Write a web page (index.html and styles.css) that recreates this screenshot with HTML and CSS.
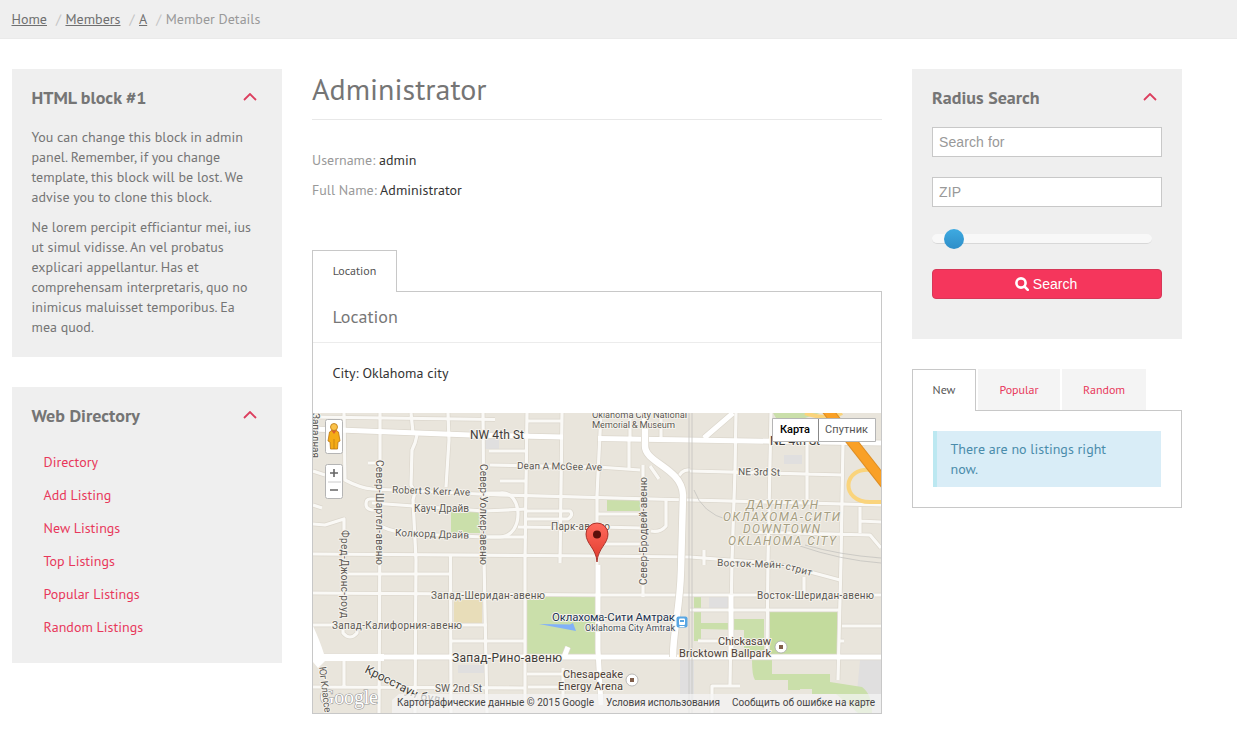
FILE: index.html
```html
<!DOCTYPE html>
<html lang="en">
<head>
<meta charset="utf-8">
<title>Administrator - Member Details</title>
<link rel="stylesheet" href="styles.css">
</head>
<body>
<nav class="breadcrumb">
  <a href="#">Home</a><span class="sep">/</span><a href="#">Members</a><span class="sep">/</span><a href="#">A</a><span class="sep">/</span><span class="current">Member Details</span>
</nav>
<div class="page">
  <aside class="column">
    <section class="box box-html">
      <header class="box-head"><h3>HTML block #1</h3><svg class="chevron" viewBox="0 0 14 8"><path d="M1 7 7 1l6 6"/></svg></header>
      <p>You can change this block in admin<br>panel. Remember, if you change<br>template, this block will be lost. We<br>advise you to clone this block.</p>
      <p>Ne lorem percipit efficiantur mei, ius<br>ut simul vidisse. An vel probatus<br>explicari appellantur. Has et<br>comprehensam interpretaris, quo no<br>inimicus maluisset temporibus. Ea<br>mea quod.</p>
    </section>
    <section class="box box-dir">
      <header class="box-head"><h3>Web Directory</h3><svg class="chevron" viewBox="0 0 14 8"><path d="M1 7 7 1l6 6"/></svg></header>
      <ul class="links">
        <li><a href="#">Directory</a></li>
        <li><a href="#">Add Listing</a></li>
        <li><a href="#">New Listings</a></li>
        <li><a href="#">Top Listings</a></li>
        <li><a href="#">Popular Listings</a></li>
        <li><a href="#">Random Listings</a></li>
      </ul>
    </section>
  </aside>
  <main class="main">
    <h1>Administrator</h1>
    <div class="fields">
      <div><span class="label">Username:</span> admin</div>
      <div><span class="label">Full Name:</span> Administrator</div>
    </div>
    <div class="tabs"><span class="tab active tab-location">Location</span></div>
    <section class="panel">
      <h4>Location</h4>
      <div class="city">City: Oklahoma city</div>
      <svg class="map" viewBox="313 413 568 300">
        <defs>
          <linearGradient id="pin" x1="0" y1="0" x2="0" y2="1"><stop offset="0" stop-color="#ff6a5d"/><stop offset="1" stop-color="#e03a2c"/></linearGradient>
          <g id="minor">
            <path d="M313 417 495 419.500M489 451H527M527 421H563M500 481H527M527 511H570Q574 515 568 519H527M484 493H500C523 490 525 536 500 537H484M518 527 597 528M598 467 640 470M490 465 597 467"/>
            <path d="M344 413 345 480Q360 488 372 489L500 495 690 500 881 505M368 463H380M313 471 325 475M313 505 322 508M313 524 325 525 344 519V560"/>
            <path d="M380 413V520L379 713M411 413 413 433M417 435 415 443 412 450 411 485 415 492 413 500 416 560 415 713M448 413 449 440 446 487"/>
            <path d="M450.500 556 451 713M483 413 484 560 487 713M527 413 525 560 525 700M562 413 560 563"/>
            <path d="M601 413 597 495 597 565M629 438V470M661 413V437M643 465V597M598 514H640M598 527 643 528M598 544H643M666 500V526Q660 533 651 531"/>
            <path d="M380 499H370Q366 499 366 504 366 509 372 510L380 510M372 503 484 511 527 509M380 526Q395 533 415 534L484 537 527 537"/>
            <path d="M313 554 597 556 690 557 770 563 795 568 840 580M345 574H450M313 593 597 595 881 595M313 625H487M343 625V633Q350 641 357 633V625M452 641H525M313 687 525 688M344 657V687"/>
            <path d="M527 674H563M563 700V668M528 687H563M690 471 843 475M736 413 735 470 732 560 730 685M771 413 768 560 767 655M807 440V504M843 443 841 560 838 680M860 507V533M860 521 881 522M752 532 870 535 881 548M690 610H840M842 626H881M840 641H844M698 641H730M712 713V686H740M804 577V594M704 565V550"/>
            <path d="M659 479 650 466M677 480Q681 469 690 470M630 413V437"/>
          </g>
          <g id="major">
            <path d="M313 429 470 435 563 437M598 438.500 881 443M313 657H881M598 565 598 650 601 705M568 647 564 657M704 438 733 413M731 595V655"/>
          </g>
        </defs>
        <rect class="land" x="313" y="413" width="568" height="300"/>
        <path class="block" d="M860 660H881V713H855ZM784 455h18v9h-18ZM709 597h20v12h-20ZM458 665h27v8h-27ZM680 658h14v45h-14ZM485 439h14v10h-14Z"/>
        <path class="park" d="M451 512H480V533H451ZM607 500H640V511H607ZM527 597H596V655H527ZM694 596H701V623H730V619H764V660H772V674H830V682L862 687Q872 694 872 713H858L836 694H812V689H800V690H788V680H755Q752 676 752 660H744V630L701 629V641H694ZM773 413H820L805 418H776Z"/>
        <path class="park-dark" d="M770 612H837V655H770Z"/>
        <rect class="school" x="454" y="600" width="28" height="24"/>
        <path class="water" d="M539 624 570 624.500 573 623 576 631Z"/>
        <use href="#minor" class="case-minor"/><use href="#major" class="case-major"/>
        <use href="#minor" class="road-minor"/><use href="#major" class="road-major"/>
        <path class="hw-case" d="M645 413V446C645 463 682 468 683 495L681 570C680 610 673 630 673 657"/>
        <path class="hw" d="M645 413V446C645 463 682 468 683 495L681 570C680 610 673 630 673 657"/>
        <path class="hw-fill" d="M313 626Q320 641 324 654H384V661H325L318 668 313 662Z"/>
        <path class="rail" d="M692 413V713M689 413V713M694 490Q702 513 728 520M800 546Q840 560 881 563M805 545Q840 555 881 558"/>
        <path class="ramp" d="M881 502H870C840 502 842 466 872 470L881 472M805 413Q828 421 842 413"/>
        <path class="freeway-case" d="M824 406 890 490"/><path class="freeway" d="M824 406 890 490"/>
        <text class="google" x="320" y="704" textLength="58">Google</text>
        <g class="txt vertical">
          <text transform="translate(376 460) rotate(90)" textLength="105">Север-Шартел-авеню</text>
          <text transform="translate(480 464) rotate(90)" textLength="101">Север-Уолкер-авеню</text>
          <text transform="translate(341 530) rotate(90)" textLength="88">Фред-Джонс-роуд</text>
          <text transform="translate(647 585) rotate(-90)" textLength="108">Север-Бродвей-авеню</text>
          <text transform="translate(319 667) rotate(83)" textLength="46">Юг Классе</text>
          <text transform="translate(312 413) rotate(90)" textLength="45">Западная</text>
        </g>
        <g class="txt">
          <text x="517" y="469" textLength="85" transform="rotate(1 517 469)">Dean A McGee Ave</text>
          <text x="392" y="493" textLength="78" transform="rotate(2 392 493)">Robert S Kerr Ave</text>
          <text x="414" y="512" textLength="55">Кауч Драйв</text>
          <text x="395" y="536" textLength="74" transform="rotate(2 395 536)">Колкорд Драйв</text>
          <text x="551" y="530" textLength="59">Парк-авеню</text>
          <text x="738" y="475" textLength="42" transform="rotate(1 738 475)">NE 3rd St</text>
          <text x="431" y="599" textLength="114">Запад-Шеридан-авеню</text>
          <text x="332" y="629" textLength="130">Запад-Калифорния-авеню</text>
          <text x="757" y="599" textLength="117">Восток-Шеридан-авеню</text>
          <text x="435" y="692" textLength="47">SW 2nd St</text>
          <text x="717" y="566" textLength="67" transform="rotate(2 717 566)">Восток-Мейн-</text>
          <text x="785" y="569" textLength="27" transform="rotate(15 785 569)">стрит</text>
        </g>
        <g class="txt big">
          <text x="470" y="439" textLength="54">NW 4th St</text>
          <text x="770" y="445" textLength="50">NE 4th St</text>
          <text x="452" y="662" textLength="110">Запад-Рино-авеню</text>
          <text transform="translate(364 672) rotate(27)" textLength="58">Кросстаун</text>
          <text transform="translate(420 700) rotate(10)" textLength="20">бул</text>
        </g>
        <g class="txt poi">
          <text x="592" y="418" textLength="95">Oklahoma City National</text>
          <text x="592" y="428" textLength="83">Memorial &amp; Museum</text>
        </g>
        <g class="txt venue">
          <text x="563" y="678" textLength="60">Chesapeake</text>
          <text x="558" y="690" textLength="65">Energy Arena</text>
          <text x="718" y="645" textLength="53">Chickasaw</text>
          <text x="679" y="657" textLength="92">Bricktown Ballpark</text>
        </g>
        <g class="txt district">
          <text x="746" y="509" textLength="72">ДАУНТАУН</text>
          <text x="723" y="521" textLength="117">ОКЛАХОМА-СИТИ</text>
          <text x="743" y="533" textLength="77">DOWNTOWN</text>
          <text x="728" y="545" textLength="108">OKLAHOMA CITY</text>
        </g>
        <text class="txt station" x="552" y="621" textLength="123">Оклахома-Сити Амтрак</text>
        <text class="txt station-sub" x="585" y="631" textLength="90">Oklahoma City Amtrak</text>
        <rect x="676.500" y="616.500" width="11" height="11" rx="2" fill="#58a6e3"/>
        <rect x="679" y="618.500" width="6" height="6.500" rx="1" fill="#fff"/><path d="M680 620h4v2h-4z" fill="#58a6e3"/><path d="M679.500 626.500h5" stroke="#fff"/>
        <g stroke="#aaa" stroke-width=".8"><circle cx="632" cy="680" r="6" fill="#fff"/><circle cx="781" cy="647" r="6" fill="#fff"/></g>
        <path d="M630 678h4v4h-4zM779 645h4v4h-4z" fill="#815f4b"/>
        <path d="M597 562C596 548 586 544 586 534A11 11 0 0 1 608 534C608 544 598 548 597 562Z" fill="url(#pin)" stroke="#a02a22" stroke-width=".9"/>
        <circle cx="597" cy="534.500" r="4" fill="#5c100b"/>
        <path d="M399 694H881V713H392V700Z" fill="#f5f5f5" opacity=".7"/>
        <g class="legal">
          <text x="397" y="706" textLength="197">Картографические данные © 2015 Google</text>
          <text x="606" y="706" textLength="114">Условия использования</text>
          <text x="732" y="706" textLength="143">Сообщить об ошибке на карте</text>
        </g>
        <g class="control">
          <rect x="325.500" y="419.500" width="17" height="34" rx="2"/>
          <rect x="325.500" y="464.500" width="17" height="34" rx="2"/>
          <path d="M772.500 418.500H875.500V441.500H772.500Z"/>
        </g>
        <path d="M328 482H341" stroke="#ccc"/>
        <path d="M818.500 419V441" stroke="#888"/>
        <path d="M330 473H338M334 469V477M330 490H338" stroke="#666" stroke-width="1.600"/>
        <path d="M329.500 432Q334 428 338.500 432L340 441 338 442 337.500 449H330.500L330 442 328 441Z" fill="#f5ac16" stroke="#ba7610" stroke-width=".8"/>
        <path d="M331 430H337L334 434Z" fill="#da612e"/><path d="M334 439V449" stroke="#ba7610" stroke-width=".7"/>
        <circle cx="334" cy="427" r="3.500" fill="#fbc249" stroke="#ba7610" stroke-width=".8"/>
        <g class="maptype"><text class="selected" x="780" y="433" textLength="30">Карта</text><text x="825" y="433" textLength="43">Спутник</text></g>
      </svg>
    </section>
  </main>
  <aside class="column">
    <section class="box box-search">
      <header class="box-head"><h3>Radius Search</h3><svg class="chevron" viewBox="0 0 14 8"><path d="M1 7 7 1l6 6"/></svg></header>
      <form class="search">
        <input type="text" placeholder="Search for">
        <input type="text" placeholder="ZIP">
        <div class="slider"><span class="knob"></span></div>
        <button type="button"><svg class="magnifier" viewBox="0 0 14 14"><circle cx="6" cy="6" r="4.600"/><path d="m9.500 9.500 3.300 3.300"/></svg>Search</button>
      </form>
    </section>
    <section class="listings">
      <div class="tabs"><span class="tab active tab-new">New</span><span class="tab tab-popular">Popular</span><span class="tab tab-random">Random</span></div>
      <div class="panel panel-list"><div class="notice">There are no listings right<br>now.</div></div>
    </section>
  </aside>
</div>
</body>
</html>
```
FILE: styles.css
```css
* { box-sizing: border-box; }
body { margin: 0; background: #fff; color: #333; font: 14px/20px "PT Sans", "Noto Sans", sans-serif; letter-spacing: 0.02px; overflow: hidden; }
h1, h3, h4, p, ul { margin: 0; padding: 0; font-weight: normal; }
a { color: #e8385b; text-decoration: none; }
.breadcrumb { height: 39px; padding: 9px 11.5px; background: #efefef; border-bottom: 1px solid #eaeaea; display: flex; color: #999; white-space: nowrap; }
.breadcrumb a { color: #6f6f6f; text-decoration: underline; }
.breadcrumb .sep { color: #c4c4c4; padding: 0 4.5px 0 9px; }
.page { display: grid; grid-template-columns: 270px 570px 270px; gap: 30px; padding: 30px 0 0 12px; align-items: start; }
.column { display: flex; flex-direction: column; gap: 30px; }
.box { background: #efefef; color: #757575; padding: 18px 20px 18px 19.5px; white-space: nowrap; }
.box-html { height: 288px; }
.box-dir { height: 276px; }
.box-search { height: 270px; padding-left: 20px; }
.box p { margin-bottom: 10px; }
.box-head { display: flex; justify-content: space-between; align-items: center; height: 20px; margin-bottom: 20px; padding-right: 5.5px; }
.box-head h3 { font-size: 18px; font-weight: bold; letter-spacing: 0; padding-top: 2px; }
.chevron { width: 14px; height: 8px; fill: none; stroke: #dc3e5e; stroke-width: 1.8; }
.links { list-style: none; padding: 1px 12px 0; line-height: 33px; }
h1 { height: 51px; border-bottom: 1px solid #e8e8e8; color: #757575; font-size: 30px; line-height: 39px; letter-spacing: 0; }
.fields { height: 130px; padding-top: 25px; line-height: 30px; }
.label { color: #999; }
.tabs { display: flex; gap: 2px; height: 42px; margin-bottom: -1px; position: relative; font-size: 12px; line-height: 40px; text-align: center; letter-spacing: 0; }
.tab { background: #f4f4f4; color: #e8385b; height: 41px; border: 1px solid #f4f4f4; border-bottom: 0; }
.tab.active { background: #fff; color: #555; border-color: #c8c8c8; height: 42px; }
.tab-location { width: 85px; }
.tab-new { width: 64px; }
.tab-popular { width: 82px; }
.tab-random { width: 84px; }
.panel { border: 1px solid #c8c8c8; }
.panel h4 { height: 51px; padding: 0 19.5px; border-bottom: 1px solid #ececec; color: #777; font-size: 18px; line-height: 50px; letter-spacing: 0; }
.city { height: 70px; padding: 0 19.5px; line-height: 60px; }
.map { display: block; width: 568px; height: 300px; font-family: Roboto, sans-serif; letter-spacing: 0; }
.search { display: flex; flex-direction: column; }
.search input { width: 230px; height: 30px; margin-bottom: 20px; padding: 0 6px; border: 1px solid #c8c8c8; border-radius: 0; font: 14px "Liberation Sans", sans-serif; background: #fff; letter-spacing: 0.1px; }
.search input::placeholder { color: #999; opacity: 1; }
.slider { width: 220px; height: 10px; margin: 7px 0 25px; border-radius: 5px; background: #f8f8f8; border-bottom: 1px solid #d8d8d8; }
.knob { display: block; width: 20px; height: 20px; margin: -5px 0 0 12px; border-radius: 50%; background: linear-gradient(#3eaae1, #2e8ec8); position: relative; }
.search button { width: 230px; height: 30px; display: flex; align-items: center; justify-content: center; gap: 4px; padding: 0 7px 0 5px; border: 1px solid #d63858; border-radius: 4px; background: #f5365c; color: #fff; font: 14px "Liberation Sans", sans-serif; }
.magnifier { width: 14px; height: 14px; fill: none; stroke: #fff; stroke-width: 2.6; stroke-linecap: round; }
.panel-list { height: 98px; padding: 20px; }
.notice { width: 228px; height: 56px; padding: 8px 13.5px; border-left: 4px solid #bce8f1; background: #d9edf7; color: #4a8cab; white-space: nowrap; }

/* map layers */
.land { fill: #e9e5dc; }
.block { fill: #e0dfdf; }
.park { fill: #cadfaa; }
.park-dark { fill: #c3db9d; }
.school { fill: #e8ddb9; }
.water { fill: #82b1f8; }
.case-minor, .road-minor, .case-major, .road-major, .hw, .hw-case, .rail, .ramp, .freeway, .freeway-case { fill: none; stroke-linejoin: round; }
.case-minor { stroke: #dcd7cd; stroke-width: 4.6; }
.road-minor { stroke: #faf9f6; stroke-width: 3.2; }
.case-major { stroke: #dcd7cd; stroke-width: 6.4; }
.road-major { stroke: #fff; stroke-width: 5; }
.hw-case { stroke: #dcd7cd; stroke-width: 8; }
.hw { stroke: #fff; stroke-width: 6.5; }
.hw-fill { fill: #fff; }
.rail { stroke: #c4c3bf; stroke-width: .8; }
.ramp { stroke: #fad47c; stroke-width: 4; }
.freeway-case { stroke: #dd8e24; stroke-width: 11; }
.freeway { stroke: #f9a026; stroke-width: 9; }
.txt { fill: #5c5954; font-size: 10px; stroke: #f5f2ec; stroke-width: 2px; paint-order: stroke; stroke-linejoin: round; }
.big { font-size: 12px; fill: #3e3c39; }
.poi { font-size: 9.5px; }
.venue { font-size: 11px; fill: #4c4138; }
.district { font-size: 12px; font-style: italic; fill: #a59e82; }
.station { font-size: 11.5px; fill: #1d3555; }
.station-sub { font-size: 9px; fill: #3f4a58; }
.google { font: 20px "Liberation Serif", serif; fill: #fff; stroke: #999; stroke-width: 1.2px; paint-order: stroke; }
.legal { font-size: 10px; fill: #444; }
.control { fill: #fff; stroke: #b5b5b5; }
.maptype { font-size: 11px; fill: #565656; }
.selected { fill: #000; font-weight: 500; }
```
